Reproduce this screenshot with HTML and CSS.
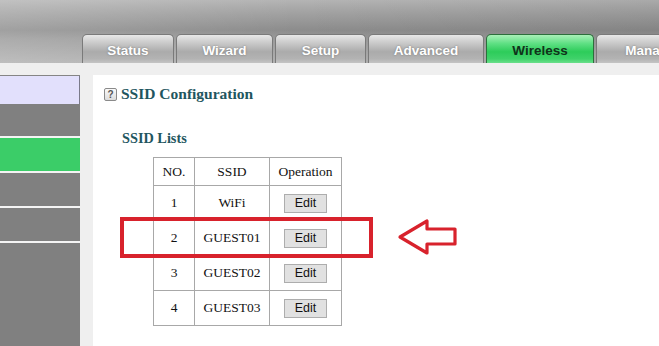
FILE: index.html
```html
<!DOCTYPE html>
<html>
<head>
<meta charset="utf-8">
<link rel="stylesheet" href="styles.css">
</head>
<body>
<div class="page">
  <header class="header">
    <div class="banner"></div>
    <nav class="tabs">
      <div class="tab w-status">Status</div>
      <div class="tab w-wizard">Wizard</div>
      <div class="tab w-setup">Setup</div>
      <div class="tab w-adv">Advanced</div>
      <div class="tab active w-wless">Wireless</div>
      <div class="tab w-mgmt">Management</div>
    </nav>
  </header>
  <div class="main">
    <aside class="sidebar">
      <div class="side-head"></div>
      <div class="side-item first"></div>
      <div class="side-item active"></div>
      <div class="side-item"></div>
      <div class="side-item"></div>
      <div class="side-rest"></div>
    </aside>
    <section class="content">
      <div class="title-row">
        <span class="help">?</span>
        <h1 class="title">SSID Configuration</h1>
      </div>
      <h2 class="subtitle">SSID Lists</h2>
      <table class="ssid-table">
        <thead>
          <tr><th class="c-no">NO.</th><th class="c-ssid">SSID</th><th class="c-op">Operation</th></tr>
        </thead>
        <tbody>
          <tr><td>1</td><td>WiFi</td><td><button class="btn">Edit</button></td></tr>
          <tr><td>2</td><td>GUEST01</td><td><button class="btn">Edit</button></td></tr>
          <tr><td>3</td><td>GUEST02</td><td><button class="btn">Edit</button></td></tr>
          <tr><td>4</td><td>GUEST03</td><td><button class="btn">Edit</button></td></tr>
        </tbody>
      </table>
      <div class="mark-box"></div>
      <svg class="mark-arrow" width="62" height="40" viewBox="0 0 62 40">
        <path d="M3,19 L30,3 L30,11 L58,11 L58,26 L30,26 L30,35 Z" fill="none" stroke="#d8222c" stroke-width="3.2" stroke-linejoin="round"/>
      </svg>
    </section>
  </div>
</div>
</body>
</html>
```
FILE: styles.css
```css
* { box-sizing: border-box; }
html, body { margin: 0; padding: 0; }
body { width: 659px; height: 346px; overflow: hidden; background: #efefef; }
.page { width: 659px; height: 346px; display: flex; flex-direction: column; overflow: hidden; }

.header {
  height: 63px;
  background:
    linear-gradient(to right, rgba(255,255,255,0.18) 0, rgba(255,255,255,0) 45%, rgba(0,0,0,0.06) 100%),
    linear-gradient(to bottom, #b4b4b4 0, #a2a2a2 20%, #8c8c8c 48%, #9a9a9a 62%, #b0b0b0 100%);
  display: flex;
  flex-direction: column;
  overflow: hidden;
}
.banner { height: 34px; }
.tabs {
  height: 29px;
  display: flex;
  align-items: flex-end;
  padding-left: 82px;
  gap: 2px;
}
.tab {
  height: 29px;
  flex: none;
  border: 1px solid #7a7a7a;
  border-bottom: none;
  border-radius: 5px 5px 0 0;
  background: linear-gradient(to bottom, #e8e8e8 0, #cdcdcd 25%, #ababab 60%, #b3b3b3 85%, #c4c4c4 100%);
  color: #fff;
  font-family: "Liberation Sans", Arial, sans-serif;
  font-weight: bold;
  font-size: 13.5px;
  text-align: center;
  padding-top: 7px;
  line-height: 18px;
  text-shadow: 0 0 2px rgba(90,90,90,0.7);
  white-space: nowrap;
}
.w-status { width: 92px; }
.w-wizard { width: 97px; }
.w-setup { width: 91px; }
.w-adv { width: 116px; }
.w-wless { width: 108px; }
.w-mgmt { width: 141px; }
.tab.active {
  background: linear-gradient(to bottom, #a9f0b8 0, #5fe084 30%, #2dcc5a 60%, #3fd26a 85%, #6adf8a 100%);
  border-color: #2d6e3c;
  color: #10321a;
  text-shadow: none;
}

.main {
  flex: 1;
  display: flex;
  padding-top: 12px;
  background: #efefef;
}
.sidebar {
  width: 80px;
  display: flex;
  flex-direction: column;
  background: #808080;
  border-top: 1px solid #858585;
}
.side-head {
  height: 28px;
  background: #e2e0fc;
  border-right: 1px solid #7a7a8a;
}
.side-item {
  height: 35px;
  border-bottom: 2px solid #f4f4f4;
  background: #808080;
}
.side-item.active { background: #3bcd68; }
.side-item.first { height: 34px; }
.side-rest { flex: 1; }

.content {
  position: relative;
  flex: 1;
  margin-left: 13px;
  background: #fff;
  padding: 12px 0 0 11px;
}
.title-row {
  display: flex;
  align-items: center;
  gap: 4px;
  height: 14px;
}
.help {
  width: 13px;
  height: 13px;
  border: 1px solid #8a8a8a;
  border-radius: 2px;
  background: linear-gradient(to bottom, #fafafa, #dcdcdc);
  color: #555;
  font-family: "Liberation Sans", Arial, sans-serif;
  font-weight: bold;
  font-size: 10px;
  line-height: 11px;
  text-align: center;
}
.title {
  margin: 0;
  font-family: "Liberation Serif", "Times New Roman", serif;
  font-weight: bold;
  font-size: 15.5px;
  color: #1f5660;
  line-height: 14px;
}
.subtitle {
  margin: 29px 0 0 18px;
  font-family: "Liberation Serif", "Times New Roman", serif;
  font-weight: bold;
  font-size: 14.3px;
  color: #1f5660;
  line-height: 16px;
}
.ssid-table {
  margin: 11px 0 0 49px;
  border-collapse: collapse;
  font-family: "Liberation Serif", "Times New Roman", serif;
  font-size: 13.5px;
  color: #111;
}
.ssid-table th, .ssid-table td {
  border: 1px solid #a8a8a8;
  text-align: center;
  font-weight: normal;
  padding: 0;
}
.ssid-table th { height: 28px; }
.ssid-table td { height: 35px; }
.c-no { width: 41px; }
.c-ssid { width: 75px; }
.c-op { width: 72px; }
.btn {
  width: 43px;
  height: 19px;
  margin: 0;
  padding: 0;
  border: 1px solid #adadad;
  background: #e1e1e1;
  font-family: "Liberation Sans", Arial, sans-serif;
  font-size: 12.5px;
  color: #111;
  vertical-align: middle;
}

.mark-box {
  position: absolute;
  left: 27px;
  top: 142px;
  width: 253px;
  height: 41px;
  border: 4px solid #d8222c;
}
.mark-arrow {
  position: absolute;
  left: 304px;
  top: 143px;
}
```
